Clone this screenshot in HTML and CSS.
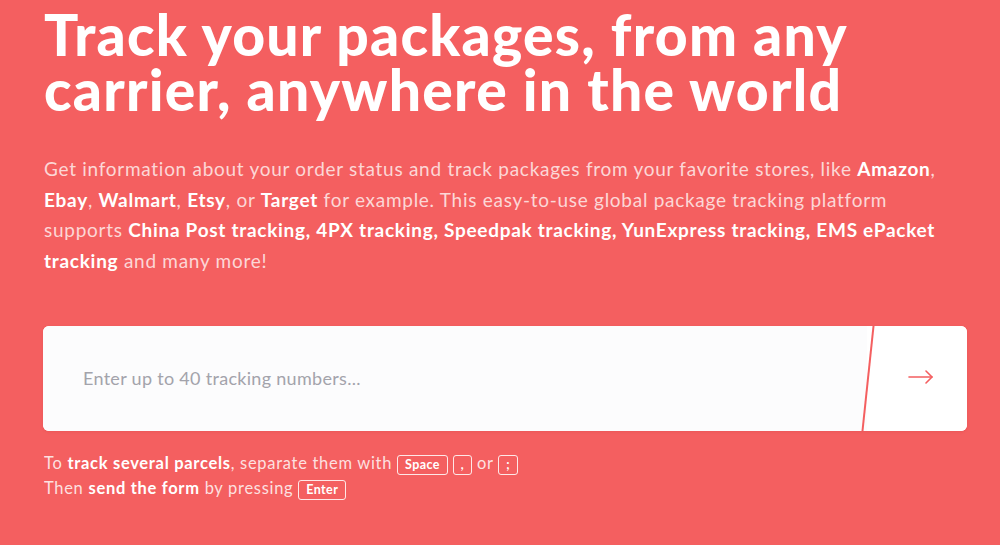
FILE: index.html
```html
<!DOCTYPE html>
<html lang="en">
<head>
    <meta charset="UTF-8">
    <meta name="viewport" content="width=device-width, initial-scale=1.0">
    <title>Package Tracking</title>
    <link rel="stylesheet" href="styles.css">
</head>
<body>

<div class="hero">
    <h1>Track your packages, from any carrier, anywhere in the world</h1>
    <p class="intro">
        Get information about your order status and track packages from your favorite stores, like <strong>Amazon</strong>,
        <strong>Ebay</strong>, <strong>Walmart</strong>, <strong>Etsy</strong>, or <strong>Target</strong> for example. This easy-to-use global package tracking platform
        supports <strong>China Post tracking, 4PX tracking, Speedpak tracking, YunExpress tracking, EMS ePacket
        tracking</strong> and many more!
    </p>

    <form class="track-form" id="trackForm">
        <input type="text" class="track-input" placeholder="Enter up to 40 tracking numbers...">
        <button type="submit" class="track-btn" aria-label="Track">
            <svg width="26" height="14" viewBox="0 0 26 14" fill="none" stroke="currentColor" stroke-width="1.6" stroke-linecap="round" stroke-linejoin="round">
                <path d="M1 7h23"/>
                <path d="M18 1l6 6-6 6"/>
            </svg>
        </button>
    </form>

    <div class="hint">
        <div>To <strong>track several parcels</strong>, separate them with <span class="key">Space</span> <span class="key">,</span> or <span class="key">;</span></div>
        <div>Then <strong>send the form</strong> by pressing <span class="key">Enter</span></div>
    </div>
</div>

</body>
</html>
```

FILE: styles.css
```css
body {
    margin: 0;
    background-color: #f45f60;
    font-family: Lato, "Open Sans", sans-serif;
    color: #fff;
}
.hero {
    padding: 7px 30px 0 44px;
}
h1 {
    margin: 0;
    font-size: 57px;
    line-height: 55px;
    font-weight: 900;
    letter-spacing: 1.25px;
    max-width: 850px;
}
.intro {
    margin: 37px 0 0;
    font-size: 19px;
    line-height: 30.7px;
    letter-spacing: 0.72px;
    color: rgba(255, 255, 255, 0.75);
    max-width: 905px;
}
.intro strong {
    color: #fff;
    font-weight: 700;
}
.track-form {
    display: flex;
    margin-top: 49px;
    width: 924px;
    height: 105px;
    background-color: #fff;
    border-radius: 6px;
    margin-left: -1px;
    overflow: hidden;
    box-shadow: 0 1px 3px rgba(180, 40, 40, 0.15);
}
.track-input {
    flex: 1;
    border: none;
    outline: none;
    padding: 0 0 0 40px;
    font-family: inherit;
    font-size: 18px;
    letter-spacing: 0.3px;
    color: #333;
    background-color: #fcfcfd;
}
.track-input::placeholder {
    color: #a3a3ab;
}
.track-btn {
    position: relative;
    width: 100px;
    border: none;
    background-color: #fff;
    color: #f45f60;
    cursor: pointer;
    padding: 0 0 0 8px;
}
.track-btn::before {
    content: "";
    position: absolute;
    left: 0;
    top: -2px;
    bottom: -2px;
    border-left: 2px solid #f45f60;
    transform: skewX(-6deg);
}
.hint {
    margin-top: 20px;
    font-size: 16.5px;
    line-height: 25px;
    letter-spacing: 0.7px;
    color: rgba(255, 255, 255, 0.82);
}
.hint strong {
    color: #fff;
}
.key {
    display: inline-block;
    padding: 0 7px;
    border: 1.5px solid rgba(255, 255, 255, 0.85);
    border-radius: 3px;
    font-size: 12.5px;
    font-weight: 700;
    line-height: 18px;
    letter-spacing: 0.4px;
    color: #fff;
}
```
